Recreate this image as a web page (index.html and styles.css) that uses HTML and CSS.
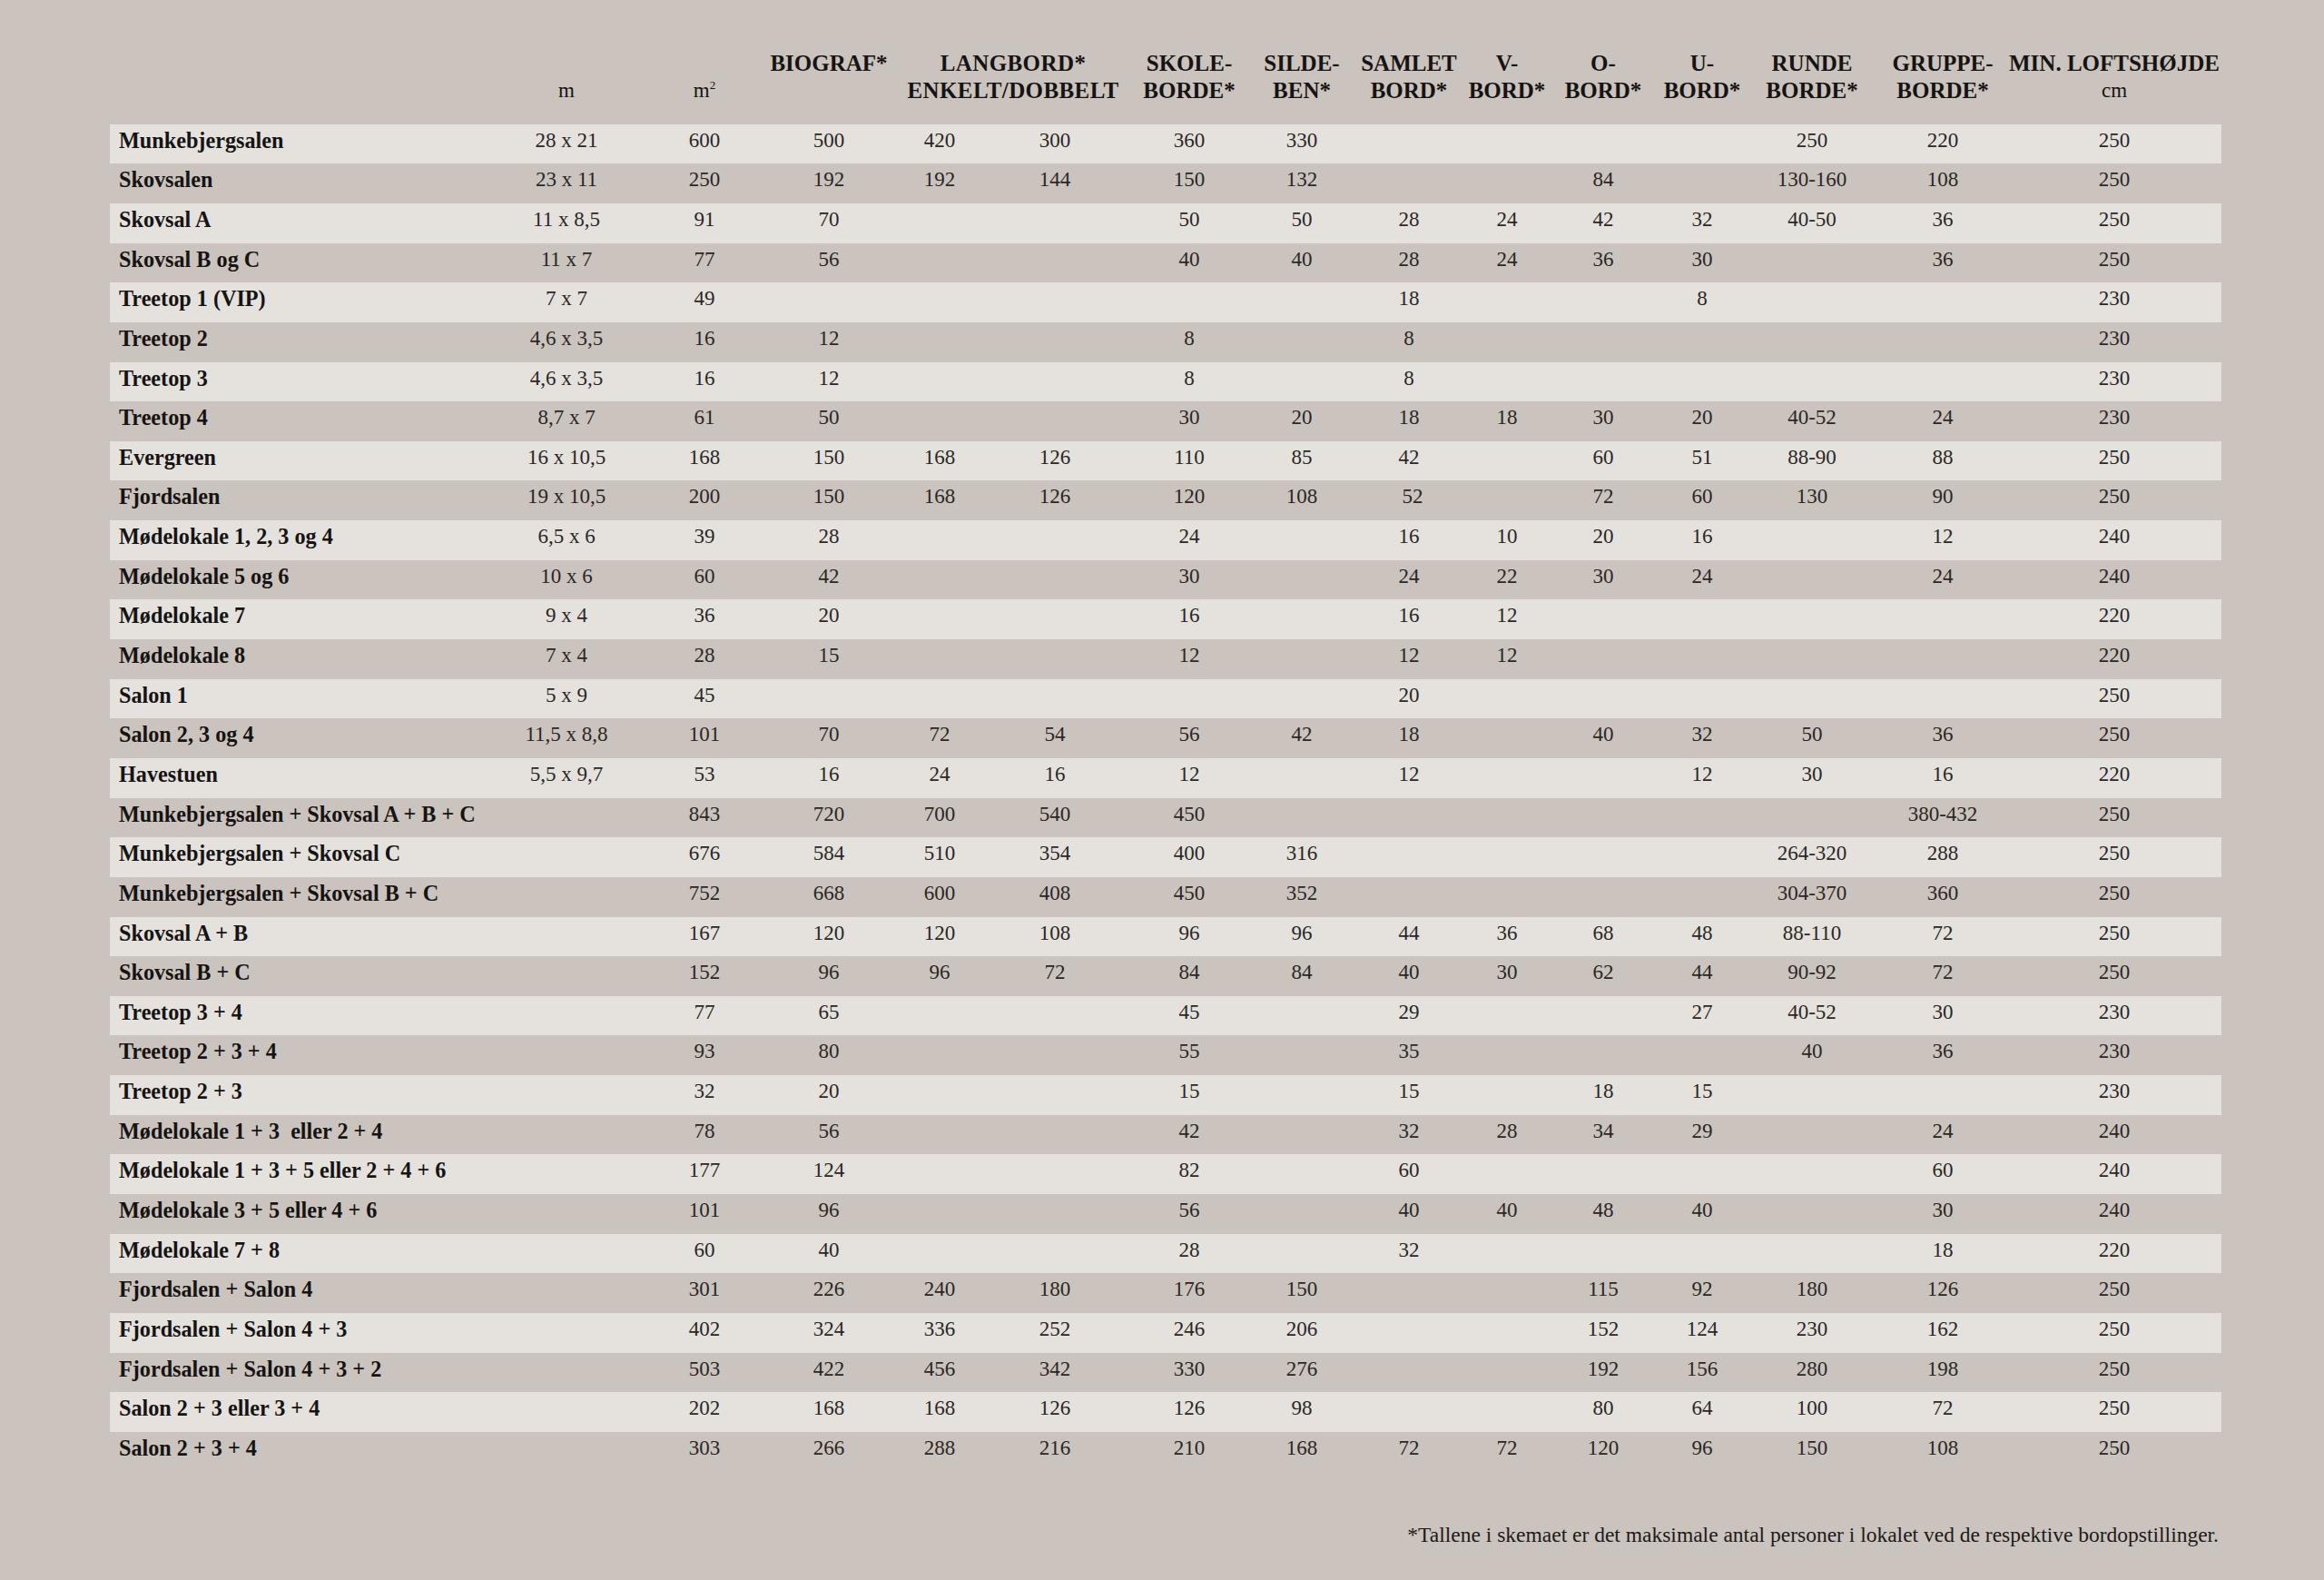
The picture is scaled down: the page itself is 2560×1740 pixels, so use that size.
FILE: index.html
```html
<!DOCTYPE html>
<html lang="da">
<head>
<meta charset="utf-8">
<title>Lokaler</title>
<link rel="stylesheet" href="styles.css">
</head>
<body>
<div class="page">
  <div class="head cols">
    <div class="hc"></div>
    <div class="hc"><span class="l"></span><span class="l reg">m</span></div>
    <div class="hc"><span class="l"></span><span class="l reg">m<sup>2</sup></span></div>
    <div class="hc"><span class="l">BIOGRAF*</span><span class="l"></span></div>
    <div class="hc span2"><span class="l">LANGBORD*</span><span class="l">ENKELT/DOBBELT</span></div>
    <div class="hc"><span class="l">SKOLE-</span><span class="l">BORDE*</span></div>
    <div class="hc"><span class="l">SILDE-</span><span class="l">BEN*</span></div>
    <div class="hc"><span class="l">SAMLET</span><span class="l">BORD*</span></div>
    <div class="hc"><span class="l">V-</span><span class="l">BORD*</span></div>
    <div class="hc"><span class="l">O-</span><span class="l">BORD*</span></div>
    <div class="hc"><span class="l">U-</span><span class="l">BORD*</span></div>
    <div class="hc"><span class="l">RUNDE</span><span class="l">BORDE*</span></div>
    <div class="hc"><span class="l">GRUPPE-</span><span class="l">BORDE*</span></div>
    <div class="hc loft"><span class="l">MIN. LOFTSHØJDE</span><span class="l reg">cm</span></div>
  </div>

  <div class="rows">
    <div class="row cols"><span class="name">Munkebjergsalen</span><span>28 x 21</span><span>600</span><span>500</span><span>420</span><span>300</span><span>360</span><span>330</span><span></span><span></span><span></span><span></span><span>250</span><span>220</span><span class="loft">250</span></div>
    <div class="row cols"><span class="name">Skovsalen</span><span>23 x 11</span><span>250</span><span>192</span><span>192</span><span>144</span><span>150</span><span>132</span><span></span><span></span><span>84</span><span></span><span>130-160</span><span>108</span><span class="loft">250</span></div>
    <div class="row cols"><span class="name">Skovsal A</span><span>11 x 8,5</span><span>91</span><span>70</span><span></span><span></span><span>50</span><span>50</span><span>28</span><span>24</span><span>42</span><span>32</span><span>40-50</span><span>36</span><span class="loft">250</span></div>
    <div class="row cols"><span class="name">Skovsal B og C</span><span>11 x 7</span><span>77</span><span>56</span><span></span><span></span><span>40</span><span>40</span><span>28</span><span>24</span><span>36</span><span>30</span><span></span><span>36</span><span class="loft">250</span></div>
    <div class="row cols"><span class="name">Treetop 1 (VIP)</span><span>7 x 7</span><span>49</span><span></span><span></span><span></span><span></span><span></span><span>18</span><span></span><span></span><span>8</span><span></span><span></span><span class="loft">230</span></div>
    <div class="row cols"><span class="name">Treetop 2</span><span>4,6 x 3,5</span><span>16</span><span>12</span><span></span><span></span><span>8</span><span></span><span>8</span><span></span><span></span><span></span><span></span><span></span><span class="loft">230</span></div>
    <div class="row cols"><span class="name">Treetop 3</span><span>4,6 x 3,5</span><span>16</span><span>12</span><span></span><span></span><span>8</span><span></span><span>8</span><span></span><span></span><span></span><span></span><span></span><span class="loft">230</span></div>
    <div class="row cols"><span class="name">Treetop 4</span><span>8,7 x 7</span><span>61</span><span>50</span><span></span><span></span><span>30</span><span>20</span><span>18</span><span>18</span><span>30</span><span>20</span><span>40-52</span><span>24</span><span class="loft">230</span></div>
    <div class="row cols"><span class="name">Evergreen</span><span>16 x 10,5</span><span>168</span><span>150</span><span>168</span><span>126</span><span>110</span><span>85</span><span>42</span><span></span><span>60</span><span>51</span><span>88-90</span><span>88</span><span class="loft">250</span></div>
    <div class="row cols"><span class="name">Fjordsalen</span><span>19 x 10,5</span><span>200</span><span>150</span><span>168</span><span>126</span><span>120</span><span>108</span><span class="nudge">52</span><span></span><span>72</span><span>60</span><span>130</span><span>90</span><span class="loft">250</span></div>
    <div class="row cols"><span class="name">Mødelokale 1, 2, 3 og 4</span><span>6,5 x 6</span><span>39</span><span>28</span><span></span><span></span><span>24</span><span></span><span>16</span><span>10</span><span>20</span><span>16</span><span></span><span>12</span><span class="loft">240</span></div>
    <div class="row cols"><span class="name">Mødelokale 5 og 6</span><span>10 x 6</span><span>60</span><span>42</span><span></span><span></span><span>30</span><span></span><span>24</span><span>22</span><span>30</span><span>24</span><span></span><span>24</span><span class="loft">240</span></div>
    <div class="row cols"><span class="name">Mødelokale 7</span><span>9 x 4</span><span>36</span><span>20</span><span></span><span></span><span>16</span><span></span><span>16</span><span>12</span><span></span><span></span><span></span><span></span><span class="loft">220</span></div>
    <div class="row cols"><span class="name">Mødelokale 8</span><span>7 x 4</span><span>28</span><span>15</span><span></span><span></span><span>12</span><span></span><span>12</span><span>12</span><span></span><span></span><span></span><span></span><span class="loft">220</span></div>
    <div class="row cols"><span class="name">Salon 1</span><span>5 x 9</span><span>45</span><span></span><span></span><span></span><span></span><span></span><span>20</span><span></span><span></span><span></span><span></span><span></span><span class="loft">250</span></div>
    <div class="row cols"><span class="name">Salon 2, 3 og 4</span><span>11,5 x 8,8</span><span>101</span><span>70</span><span>72</span><span>54</span><span>56</span><span>42</span><span>18</span><span></span><span>40</span><span>32</span><span>50</span><span>36</span><span class="loft">250</span></div>
    <div class="row cols"><span class="name">Havestuen</span><span>5,5 x 9,7</span><span>53</span><span>16</span><span>24</span><span>16</span><span>12</span><span></span><span>12</span><span></span><span></span><span>12</span><span>30</span><span>16</span><span class="loft">220</span></div>
    <div class="row cols"><span class="name">Munkebjergsalen + Skovsal A + B + C</span><span></span><span>843</span><span>720</span><span>700</span><span>540</span><span>450</span><span></span><span></span><span></span><span></span><span></span><span></span><span>380-432</span><span class="loft">250</span></div>
    <div class="row cols"><span class="name">Munkebjergsalen + Skovsal C</span><span></span><span>676</span><span>584</span><span>510</span><span>354</span><span>400</span><span>316</span><span></span><span></span><span></span><span></span><span>264-320</span><span>288</span><span class="loft">250</span></div>
    <div class="row cols"><span class="name">Munkebjergsalen + Skovsal B + C</span><span></span><span>752</span><span>668</span><span>600</span><span>408</span><span>450</span><span>352</span><span></span><span></span><span></span><span></span><span>304-370</span><span>360</span><span class="loft">250</span></div>
    <div class="row cols"><span class="name">Skovsal A + B</span><span></span><span>167</span><span>120</span><span>120</span><span>108</span><span>96</span><span>96</span><span>44</span><span>36</span><span>68</span><span>48</span><span>88-110</span><span>72</span><span class="loft">250</span></div>
    <div class="row cols"><span class="name">Skovsal B + C</span><span></span><span>152</span><span>96</span><span>96</span><span>72</span><span>84</span><span>84</span><span>40</span><span>30</span><span>62</span><span>44</span><span>90-92</span><span>72</span><span class="loft">250</span></div>
    <div class="row cols"><span class="name">Treetop 3 + 4</span><span></span><span>77</span><span>65</span><span></span><span></span><span>45</span><span></span><span>29</span><span></span><span></span><span>27</span><span>40-52</span><span>30</span><span class="loft">230</span></div>
    <div class="row cols"><span class="name">Treetop 2 + 3 + 4</span><span></span><span>93</span><span>80</span><span></span><span></span><span>55</span><span></span><span>35</span><span></span><span></span><span></span><span>40</span><span>36</span><span class="loft">230</span></div>
    <div class="row cols"><span class="name">Treetop 2 + 3</span><span></span><span>32</span><span>20</span><span></span><span></span><span>15</span><span></span><span>15</span><span></span><span>18</span><span>15</span><span></span><span></span><span class="loft">230</span></div>
    <div class="row cols"><span class="name">Mødelokale 1 + 3 &nbsp;eller 2 + 4</span><span></span><span>78</span><span>56</span><span></span><span></span><span>42</span><span></span><span>32</span><span>28</span><span>34</span><span>29</span><span></span><span>24</span><span class="loft">240</span></div>
    <div class="row cols"><span class="name">Mødelokale 1 + 3 + 5 eller 2 + 4 + 6</span><span></span><span>177</span><span>124</span><span></span><span></span><span>82</span><span></span><span>60</span><span></span><span></span><span></span><span></span><span>60</span><span class="loft">240</span></div>
    <div class="row cols"><span class="name">Mødelokale 3 + 5 eller 4 + 6</span><span></span><span>101</span><span>96</span><span></span><span></span><span>56</span><span></span><span>40</span><span>40</span><span>48</span><span>40</span><span></span><span>30</span><span class="loft">240</span></div>
    <div class="row cols"><span class="name">Mødelokale 7 + 8</span><span></span><span>60</span><span>40</span><span></span><span></span><span>28</span><span></span><span>32</span><span></span><span></span><span></span><span></span><span>18</span><span class="loft">220</span></div>
    <div class="row cols"><span class="name">Fjordsalen + Salon 4</span><span></span><span>301</span><span>226</span><span>240</span><span>180</span><span>176</span><span>150</span><span></span><span></span><span>115</span><span>92</span><span>180</span><span>126</span><span class="loft">250</span></div>
    <div class="row cols"><span class="name">Fjordsalen + Salon 4 + 3</span><span></span><span>402</span><span>324</span><span>336</span><span>252</span><span>246</span><span>206</span><span></span><span></span><span>152</span><span>124</span><span>230</span><span>162</span><span class="loft">250</span></div>
    <div class="row cols"><span class="name">Fjordsalen + Salon 4 + 3 + 2</span><span></span><span>503</span><span>422</span><span>456</span><span>342</span><span>330</span><span>276</span><span></span><span></span><span>192</span><span>156</span><span>280</span><span>198</span><span class="loft">250</span></div>
    <div class="row cols"><span class="name">Salon 2 + 3 eller 3 + 4</span><span></span><span>202</span><span>168</span><span>168</span><span>126</span><span>126</span><span>98</span><span></span><span></span><span>80</span><span>64</span><span>100</span><span>72</span><span class="loft">250</span></div>
    <div class="row cols"><span class="name">Salon 2 + 3 + 4</span><span></span><span>303</span><span>266</span><span>288</span><span>216</span><span>210</span><span>168</span><span>72</span><span>72</span><span>120</span><span>96</span><span>150</span><span>108</span><span class="loft">250</span></div>
  </div>

  <p class="note">*Tallene i skemaet er det maksimale antal personer i lokalet ved de respektive bordopstillinger.</p>
</div>
</body>
</html>
```

FILE: styles.css
```css
html, body {
  margin: 0;
  padding: 0;
  background: #cbc3bd;
}

body {
  width: 2560px;
  min-height: 1740px;
  font-family: "Liberation Serif", "Times New Roman", serif;
  color: #1c1a19;
}

.page {
  box-sizing: border-box;
  width: 2560px;
  padding: 55px 113px 0 121px;
}

.cols {
  display: grid;
  grid-template-columns: 427px 152px 152px 122px 122px 132px 164px 84px 152px 64px 148px 70px 172px 116px 249px;
}

/* header */
.head {
  height: 60px;
  margin-bottom: 21.7px;
}

.hc {
  display: flex;
  flex-direction: column;
  align-items: center;
  font-size: 25px;
  font-weight: 700;
  color: #161413;
}

.hc.span2 {
  grid-column: span 2;
  padding-left: 30px;
  letter-spacing: 0.4px;
}

.hc.loft {
  padding-left: 13px;
}

.l {
  display: block;
  height: 30px;
  line-height: 30px;
  white-space: nowrap;
}

.l.reg {
  font-weight: 400;
  font-size: 23px;
}

.l sup {
  font-size: 13px;
  line-height: 0;
  vertical-align: 9px;
}

/* rows */
.row {
  height: 43.65px;
}

.row:nth-child(odd) {
  background: #e5e2de;
}

.row > span {
  display: flex;
  justify-content: center;
  white-space: nowrap;
  font-size: 23px;
  line-height: 36px;
  color: #2a2725;
}

.row > .name {
  justify-content: flex-start;
  padding-left: 10px;
  font-size: 24.2px;
  font-weight: 700;
  color: #161413;
}

.row > .loft {
  padding-left: 13px;
}

.row > .nudge {
  padding-left: 8px;
}

/* footnote */
.note {
  margin: 54.8px 3px 0 0;
  text-align: right;
  font-size: 23.5px;
  line-height: 30px;
  color: #1c1a19;
}
```
